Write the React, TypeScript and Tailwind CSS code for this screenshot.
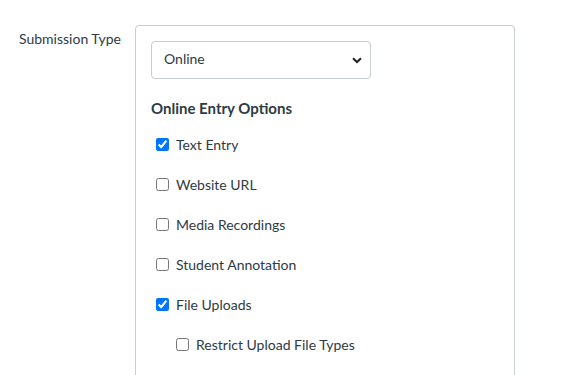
import React from "react";

const options = [
  { label: "Text Entry", checked: true },
  { label: "Website URL", checked: false },
  { label: "Media Recordings", checked: false },
  { label: "Student Annotation", checked: false },
  { label: "File Uploads", checked: true },
];

function Check({ label, checked, nested }: { label: string; checked: boolean; nested?: boolean }) {
  return (
    <label className={`flex h-[40px] items-center gap-[7px] ${nested ? "pl-[25px]" : "pl-[5px]"}`}>
      <input type="checkbox" defaultChecked={checked} className="m-0 h-[13px] w-[13px]" />
      <span className="text-[14px] text-[#2d3b45]">{label}</span>
    </label>
  );
}

export default function App() {
  return (
    <div className="flex h-[375px] w-[564px] overflow-hidden bg-white pt-[25px] font-['Lato',sans-serif] text-[#2d3b45]">
      <div className="w-[135px] shrink-0 whitespace-nowrap pl-[19px] pt-[4px] text-[14px] leading-[20px]">
        Submission Type
      </div>
      <div className="h-[400px] w-[380px] shrink-0 rounded-t-[4px] border border-[#c7cdd1] px-[15px] pt-[15px]">
        <div className="relative flex h-[38px] w-[220px] items-center rounded-[4px] border border-[#c7cdd1] pb-[3px] pl-[12px] text-[14px]">
          Online
          <svg className="absolute right-[8px] top-[15px]" width="10" height="7" viewBox="0 0 10 7">
            <path d="M1 1.2 L5 5 L9 1.2" fill="none" stroke="#222" strokeWidth="2" />
          </svg>
        </div>
        <div className="mt-[19px] text-[15px] font-bold leading-[20px]">Online Entry Options</div>
        <div className="mt-[6px]">
          {options.map((o) => (
            <Check key={o.label} label={o.label} checked={o.checked} />
          ))}
          <Check label="Restrict Upload File Types" checked={false} nested />
        </div>
      </div>
    </div>
  );
}
